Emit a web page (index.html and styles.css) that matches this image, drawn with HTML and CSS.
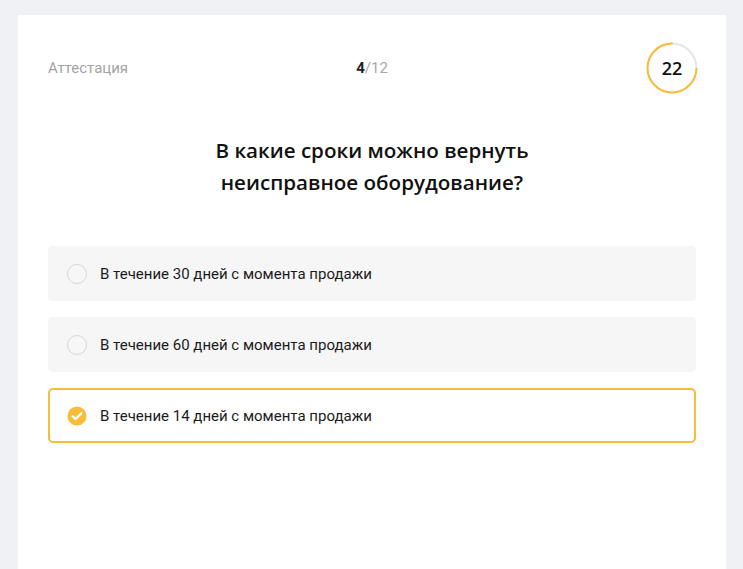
FILE: index.html
```html
<!DOCTYPE html>
<html lang="ru">
<head>
<meta charset="utf-8">
<link rel="stylesheet" href="styles.css">
</head>
<body>
<div class="page">
  <div class="card">
    <div class="header">
      <div class="title">Аттестация</div>
      <div class="counter"><b>4</b>/12</div>
      <div class="timer">
        <svg width="52" height="52" viewBox="0 0 52 52">
          <circle cx="26" cy="26" r="24.5" fill="none" stroke="#e6e6e6" stroke-width="2"/>
          <circle cx="26" cy="26" r="24.5" fill="none" stroke="#f9bd3a" stroke-width="2"
            stroke-dasharray="115.45 153.94"/>
        </svg>
        <span class="timer-num">22</span>
      </div>
    </div>
    <h1 class="question">В какие сроки можно вернуть<br>неисправное оборудование?</h1>
    <div class="options">
      <div class="option">
        <span class="radio"></span>
        <span class="label">В течение 30 дней с момента продажи</span>
      </div>
      <div class="option">
        <span class="radio"></span>
        <span class="label">В течение 60 дней с момента продажи</span>
      </div>
      <div class="option selected">
        <svg class="check" width="20" height="20" viewBox="0 0 20 20">
          <circle cx="10" cy="10" r="9.5" fill="#f9bd3a"/>
          <path d="M5.6 10.2 L8.6 13.1 L14.4 7.2" fill="none" stroke="#fff" stroke-width="2.2" stroke-linecap="round" stroke-linejoin="round"/>
        </svg>
        <span class="label">В течение 14 дней с момента продажи</span>
      </div>
    </div>
  </div>
</div>
</body>
</html>
```
FILE: styles.css
```css
html, body {
  margin: 0;
  padding: 0;
  height: 100%;
  background: #f0f1f5;
}
body {
  font-family: Roboto, "Liberation Sans", sans-serif;
  overflow: hidden;
}
.page {
  padding: 15px 17px 0 18px;
  height: 100%;
  box-sizing: border-box;
}
.card {
  background: #fff;
  height: 100%;
  box-sizing: border-box;
  padding: 27px 30px 0 30px;
}
.header {
  display: grid;
  grid-template-columns: 1fr auto 1fr;
  align-items: center;
  height: 52px;
}
.title {
  font-size: 15px;
  color: #a3a3a3;
}
.counter {
  font-size: 15px;
  color: #a8a8a8;
  text-align: center;
}
.counter b {
  color: #222;
  font-weight: 700;
}
.timer {
  justify-self: end;
  position: relative;
  width: 52px;
  height: 52px;
  margin-right: -2px;
}
.timer svg {
  display: block;
}
.timer-num {
  position: absolute;
  inset: 0;
  display: flex;
  align-items: center;
  justify-content: center;
  font-family: "Open Sans", sans-serif;
  font-weight: 600;
  font-size: 18px;
  color: #111;
}
.question {
  margin: 40px 0 0 0;
  text-align: center;
  font-family: "Open Sans", sans-serif;
  font-weight: 600;
  font-size: 20.6px;
  line-height: 32px;
  color: #111;
}
.options {
  margin-top: 48px;
  display: flex;
  flex-direction: column;
  gap: 16px;
}
.option {
  height: 55px;
  box-sizing: border-box;
  background: #f6f6f6;
  border-radius: 5px;
  display: flex;
  align-items: center;
  padding-left: 19px;
  gap: 13px;
  font-size: 15px;
  color: #1c1c1c;
}
.radio {
  width: 20px;
  height: 20px;
  box-sizing: border-box;
  border: 1px solid #d6d6d6;
  border-radius: 50%;
  background: #f7f7f7;
  flex: none;
}
.option.selected {
  background: #fff;
  border: 2px solid #f9bd3a;
  padding-left: 17px;
}
.check {
  flex: none;
  display: block;
}
```
